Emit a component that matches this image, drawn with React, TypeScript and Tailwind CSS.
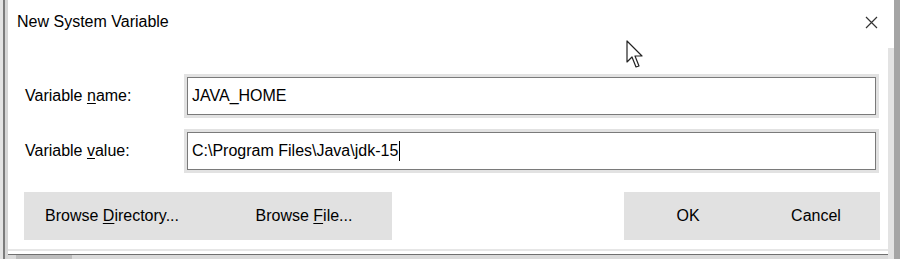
import React from 'react';

const font = { fontFamily: '"Liberation Sans", Arial, sans-serif' };

function Field({ label, accessKey, rest, value, caret }: { label: string; accessKey: string; rest: string; value: string; caret?: boolean }) {
  return (
    <div className="flex items-center h-[44px]">
      <div className="w-[176px] pl-[17px] text-[16px] text-black">
        {label}
        <span className="underline underline-offset-2">{accessKey}</span>
        {rest}
      </div>
      <div className="flex-1 h-[44px] border-[3px] border-[#e2e2e2]">
        <div className="h-full border border-[#7a7a7a] bg-white flex items-center pl-[4px] text-[16px] text-black">
          <span>{value}</span>
          {caret && <span className="ml-[1px] w-[1px] h-[20px] bg-black" />}
        </div>
      </div>
    </div>
  );
}

function Btn({ width, children }: { width: string; children: React.ReactNode }) {
  return (
    <button className={`${width} h-full flex items-center justify-center text-[16px] text-black`}>
      <span>{children}</span>
    </button>
  );
}

export default function App() {
  return (
    <div className="w-[900px] h-[259px] flex bg-white relative overflow-hidden" style={font}>
      {/* left window edge */}
      <div className="flex h-full">
        <div className="w-[3px] bg-[#e4e4e4]" />
        <div className="w-[2px] bg-[#7c7c7c]" />
        <div className="w-[3px] bg-[#d6d6d6]" />
      </div>

      <div className="flex-1 flex flex-col">
        {/* title bar */}
        <div className="h-[44px] flex items-center justify-between pl-[9px] pr-[10px]">
          <span className="text-[16px] text-black">New System Variable</span>
          <svg width="13" height="13" viewBox="0 0 13 13" className="text-[#333]">
            <path d="M1 1 L12 12 M12 1 L1 12" stroke="currentColor" strokeWidth="1.2" />
          </svg>
        </div>

        <div className="pt-[30px] pr-[9px] flex flex-col gap-[11px]">
          <Field label="Variable " accessKey="n" rest="ame:" value="JAVA_HOME" />
          <Field label="Variable " accessKey="v" rest="alue:" value="C:\Program Files\Java\jdk-15" caret />
        </div>

        <div className="mt-[19px] h-[48px] flex justify-between pl-[16px] pr-[8px]">
          <div className="w-[368px] h-full bg-[#e1e1e1] flex justify-between">
            <Btn width="w-[176px]">
              Browse <span className="underline underline-offset-2">D</span>irectory...
            </Btn>
            <Btn width="w-[176px]">
              Browse <span className="underline underline-offset-2">F</span>ile...
            </Btn>
          </div>
          <div className="w-[256px] h-full bg-[#e1e1e1] flex">
            <Btn width="w-[128px]">OK</Btn>
            <Btn width="w-[128px]">Cancel</Btn>
          </div>
        </div>

        {/* bottom edge */}
        <div className="mt-[9px] h-[2px] bg-[#e6e6e6]" />
        <div className="h-[3px]" />
        <div className="h-[1px] bg-[#6f6f6f]" />
        <div className="flex-1 bg-[#dadada] flex">
          <div className="ml-[8px] w-[56px] bg-[#bdbdbd]" />
        </div>
      </div>

      {/* right edge */}
      <div className="flex h-full">
        <div className="w-[6px] flex flex-col">
          <div className="h-[48px]" />
          <div className="flex-1 bg-[#e3e3e3]" />
        </div>
        <div className="w-[6px] bg-[#a5a5a5]" />
      </div>

      {/* mouse pointer */}
      <svg className="absolute left-[626px] top-[40px]" width="18" height="30" viewBox="0 0 18 30">
        <path d="M1 1 L1 22 L6 17 L10 27 L13 26 L9 16 L16 16 Z" fill="white" stroke="#222" strokeWidth="1.2" strokeLinejoin="round" />
      </svg>
    </div>
  );
}
